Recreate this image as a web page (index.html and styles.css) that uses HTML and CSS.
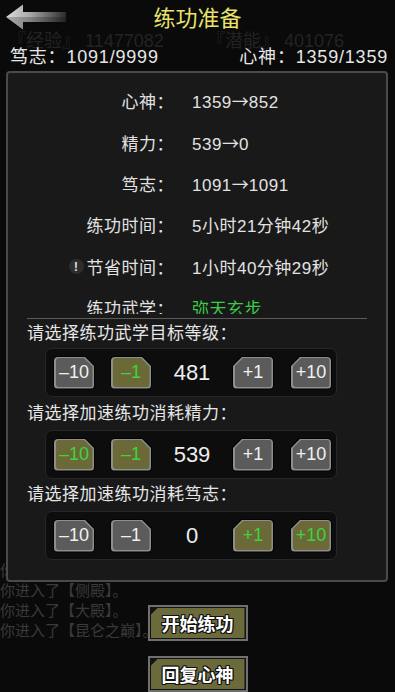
FILE: index.html
```html
<!DOCTYPE html>
<html lang="zh">
<head>
<meta charset="utf-8">
<title>练功准备</title>
<link rel="stylesheet" href="styles.css">
</head>
<body>
<div class="screen">
  <div class="bg-layer">
    <div class="faint-stats"><span>『经验』 11477082</span><span>『潜能』 401076</span></div>
    <div class="chat">
      <p>你进入了【山门】。</p>
      <p>你进入了【侧殿】。</p>
      <p>你进入了【大殿】。</p>
      <p>你进入了【昆仑之巅】。</p>
    </div>
  </div>

  <div class="modal">
    <header class="topbar">
      <button class="back" aria-label="返回">
        <svg width="70" height="34" viewBox="0 0 70 34">
          <defs>
            <linearGradient id="ag" x1="0" x2="1" y1="0" y2="0">
              <stop offset="0" stop-color="#dcdcdc"/>
              <stop offset="0.4" stop-color="#a8a8a8"/>
              <stop offset="1" stop-color="#2c2c2c"/>
            </linearGradient>
          </defs>
          <path d="M6 17 L23 4.5 L23 12 L66 12 L66 22 L23 22 L23 29.5 Z" fill="url(#ag)"/>
          <path d="M6 17 L23 29.5 L23 22 L66 22 L66 17 Z" fill="#000" opacity="0.22"/>
        </svg>
      </button>
      <h1>练功准备</h1>
      <span></span>
    </header>

    <div class="stats">
      <span>笃志：1091/9999</span>
      <span>心神：1359/1359</span>
    </div>

    <section class="panel">
      <div class="info">
        <div class="row"><span class="k">心神：</span><span class="v">1359<span class="ar">→</span>852</span></div>
        <div class="row"><span class="k">精力：</span><span class="v">539<span class="ar">→</span>0</span></div>
        <div class="row"><span class="k">笃志：</span><span class="v">1091<span class="ar">→</span>1091</span></div>
        <div class="row"><span class="k">练功时间：</span><span class="v">5小时21分钟42秒</span></div>
        <div class="row"><span class="k"><i class="warn">!</i>节省时间：</span><span class="v">1小时40分钟29秒</span></div>
        <div class="row"><span class="k">练功武学：</span><span class="v green">弥天玄步</span></div>
      </div>
      <hr class="sep">

      <div class="sec-label first">请选择练功武学目标等级：</div>
      <div class="stepper">
        <button class="sb minus"><i><b>–10</b></i></button>
        <button class="sb minus on g15"><i><b>–1</b></i></button>
        <span class="num">481</span>
        <button class="sb plus"><i><b>+1</b></i></button>
        <button class="sb plus g16"><i><b>+10</b></i></button>
      </div>

      <div class="sec-label tall">请选择加速练功消耗精力：</div>
      <div class="stepper">
        <button class="sb minus on"><i><b>–10</b></i></button>
        <button class="sb minus on g15"><i><b>–1</b></i></button>
        <span class="num">539</span>
        <button class="sb plus"><i><b>+1</b></i></button>
        <button class="sb plus g16"><i><b>+10</b></i></button>
      </div>

      <div class="sec-label">请选择加速练功消耗笃志：</div>
      <div class="stepper">
        <button class="sb minus"><i><b>–10</b></i></button>
        <button class="sb minus g15"><i><b>–1</b></i></button>
        <span class="num">0</span>
        <button class="sb plus on"><i><b>+1</b></i></button>
        <button class="sb plus on g16"><i><b>+10</b></i></button>
      </div>
    </section>

    <div class="actions">
      <button class="act"><span>开始练功</span></button>
      <button class="act"><span>回复心神</span></button>
    </div>
  </div>
</div>
</body>
</html>
```

FILE: styles.css
```css
html, body {
  margin: 0;
  padding: 0;
  background: #0a0a0a;
}
body {
  font-family: "Liberation Sans", "Noto Sans CJK SC", sans-serif;
  color: #e2e2e2;
}
.screen {
  position: relative;
  width: 395px;
  height: 692px;
  overflow: hidden;
}

/* background game layer */
.bg-layer {
  padding-top: 31px;
  color: #232323;
}
.faint-stats {
  display: grid;
  grid-template-columns: 199px 1fr;
  padding-left: 8px;
  font-size: 18px;
  line-height: 20px;
  white-space: nowrap;
}
.chat {
  margin-top: 510px;
  font-size: 15px;
  line-height: 20px;
  color: #3a3a3a;
}
.chat p {
  margin: 0;
  white-space: nowrap;
}

/* modal layer */
.modal {
  position: absolute;
  inset: 0;
  display: flex;
  flex-direction: column;
}
.topbar {
  height: 37px;
  display: grid;
  grid-template-columns: 1fr auto 1fr;
  align-items: start;
}
.back {
  background: none;
  border: 0;
  padding: 0;
  margin: 0;
  justify-self: start;
}
.back svg { display: block; }
.topbar h1 {
  margin: 0;
  font-size: 22px;
  font-weight: normal;
  line-height: 37px;
  color: #e9e36b;
}
.stats {
  height: 35px;
  display: flex;
  justify-content: space-between;
  align-items: center;
  padding: 2px 7px 0 10px;
  box-sizing: border-box;
  font-size: 18px;
  letter-spacing: 0.8px;
  color: #e6e6e6;
}

.panel {
  margin: 0 7px 0 6px;
  border: 2px solid #4a4a4a;
  border-radius: 4px;
  background: #191919;
  padding-bottom: 20px;
}
.info {
  box-sizing: border-box;
  height: 241px;
  overflow: hidden;
  padding-top: 7px;
}
.row {
  display: grid;
  grid-template-columns: 166px 1fr;
  column-gap: 18px;
  height: 41.4px;
  align-items: center;
  font-size: 17px;
  letter-spacing: 0.5px;
}
.k {
  display: flex;
  justify-content: flex-end;
  align-items: center;
}
.ar {
  font-family: "Noto Sans CJK SC", sans-serif;
  letter-spacing: 0;
}
.v.green { color: #3ccb4a; }
.warn {
  display: inline-block;
  width: 15px;
  height: 15px;
  border-radius: 50%;
  background: #2e2e2e;
  color: #d8d8d8;
  font-style: normal;
  font-weight: bold;
  font-size: 13px;
  line-height: 15px;
  text-align: center;
  letter-spacing: 0;
  margin-right: 3px;
}
.sep {
  height: 0;
  border: 0;
  border-top: 1px solid #5a5a5a;
  margin: 4px 19px 0;
}
.sec-label {
  height: 32px;
  line-height: 32px;
  padding-left: 19px;
  font-size: 17px;
  letter-spacing: 0.5px;
  color: #e6e6e6;
}
.sec-label.first { height: 29px; line-height: 29px; }
.sec-label.tall { height: 33px; line-height: 33px; }

.stepper {
  box-sizing: border-box;
  height: 49px;
  width: 292px;
  margin-left: 37px;
  border: 1px solid #262626;
  border-radius: 7px;
  background: #0d0d0d;
  display: flex;
  align-items: center;
  padding-left: 7px;
}
.num {
  width: 80px;
  text-align: center;
  font-size: 22px;
  color: #eeeeee;
}
.sb {
  box-sizing: border-box;
  width: 42px;
  height: 34px;
  margin: 0;
  border: 0;
  padding: 1px;
  background: #030303;
  border-radius: 5px;
  font-family: inherit;
}
.sb i {
  display: block;
  box-sizing: border-box;
  height: 100%;
  padding: 1.5px;
  background: #8e8e8e;
  border-radius: 4px;
  font-style: normal;
}
.sb b {
  display: flex;
  height: 100%;
  align-items: center;
  justify-content: center;
  background: #5b5b5b;
  border-radius: 3px;
  font-weight: normal;
  font-size: 18px;
  color: #f0f0f0;
}
.sb.on b {
  background: #6b6937;
  color: #3dd43d;
}
.sb.minus { clip-path: polygon(0 0, calc(100% - 10px) 0, 100% 10px, 100% 100%, 0 100%); }
.sb.minus i { clip-path: polygon(0 0, calc(100% - 9.4px) 0, 100% 9.4px, 100% 100%, 0 100%); }
.sb.minus b { clip-path: polygon(0 0, calc(100% - 8.5px) 0, 100% 8.5px, 100% 100%, 0 100%); }
.sb.plus { clip-path: polygon(10px 0, 100% 0, 100% 100%, 0 100%, 0 10px); }
.sb.plus i { clip-path: polygon(9.4px 0, 100% 0, 100% 100%, 0 100%, 0 9.4px); }
.sb.plus b { clip-path: polygon(8.5px 0, 100% 0, 100% 100%, 0 100%, 0 8.5px); }
.g15 { margin-left: 15px; }
.g16 { margin-left: 16px; }

.actions {
  display: flex;
  flex-direction: column;
  align-items: center;
  gap: 15px;
  padding-top: 23px;
}
.act {
  box-sizing: border-box;
  width: 100px;
  height: 36px;
  margin: 0;
  border: 2px solid #707070;
  background: #141414;
  padding: 1px;
  font-family: inherit;
}
.act span {
  display: flex;
  height: 100%;
  align-items: center;
  justify-content: center;
  background: #6b6a3a;
  clip-path: polygon(7px 0, 100% 0, 100% 100%, 0 100%, 0 7px);
  color: #ffffff;
  font-size: 18px;
  font-weight: bold;
  text-shadow: 1px 0 0 #111, -1px 0 0 #111, 0 1px 0 #111, 0 -1px 0 #111, 1px 1px 0 #111, -1px -1px 0 #111, 1px -1px 0 #111, -1px 1px 0 #111;
}
```
